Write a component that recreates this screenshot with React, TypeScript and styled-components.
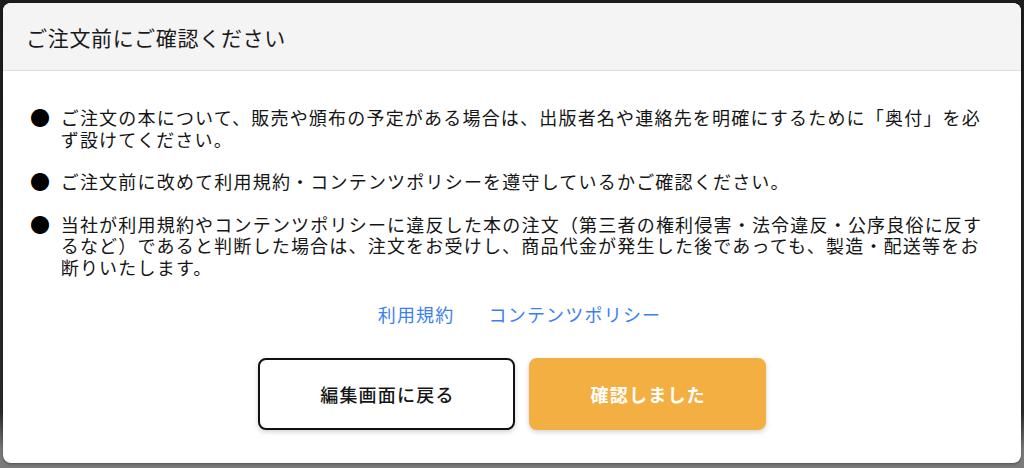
import React from "react";
import styled, { createGlobalStyle } from "styled-components";

const GlobalStyle = createGlobalStyle`
  html, body {
    margin: 0;
    padding: 0;
    width: 1024px;
    height: 468px;
    overflow: hidden;
  }
  body {
    background: linear-gradient(to bottom, #1c1c1c 0%, #2a2a2a 88%, #7b7b7b 96%, #7b7b7b 100%);
    font-family: "Noto Sans CJK JP", "Noto Sans", sans-serif;
    color: #111;
  }
`;

const Overlay = styled.div`
  box-sizing: border-box;
  width: 1024px;
  height: 468px;
  padding: 3px 3px 5px 3px;
  display: flex;
`;

const Dialog = styled.div`
  flex: 1;
  display: flex;
  flex-direction: column;
  background: #ffffff;
  border-radius: 8px;
  overflow: hidden;
  box-shadow: 0 1px 3px rgba(0, 0, 0, 0.35);
`;

const Header = styled.div`
  height: 67px;
  display: flex;
  align-items: center;
  padding-left: 23px;
  background: #f4f4f4;
  border-bottom: 1px solid #dcdcdc;
`;

const Title = styled.h2`
  margin: 0;
  font-size: 21px;
  font-weight: 400;
  letter-spacing: 0.7px;
  color: #1a1a1a;
  line-height: 24px;
`;

const Body = styled.div`
  flex: 1;
  display: flex;
  flex-direction: column;
  padding: 36px 28px 33px 28px;
`;

const List = styled.ul`
  list-style: none;
  margin: 0;
  padding: 0;
  display: flex;
  flex-direction: column;
  gap: 21px;
`;

const Item = styled.li`
  display: flex;
  align-items: flex-start;
  font-size: 18px;
  line-height: 21.5px;
  letter-spacing: 1.2px;
  color: #151515;
`;

const Bullet = styled.span`
  flex: 0 0 30.7px;
  font-size: 20px;
  line-height: 21.5px;
  letter-spacing: 0;
  margin-left: -1px;
  color: #000;
`;

const ItemText = styled.span`
  flex: 1;
`;

const Links = styled.div`
  margin-top: 25px;
  display: flex;
  justify-content: center;
  gap: 34px;
  padding-left: 15px;
`;

const Link = styled.a`
  font-size: 18px;
  line-height: 22px;
  letter-spacing: 1.2px;
  color: #3b7ff0;
  text-decoration: none;
  cursor: pointer;
`;

const Buttons = styled.div`
  margin-top: 33px;
  display: flex;
  justify-content: center;
  gap: 14px;
`;

const Button = styled.button<{ $primary?: boolean }>`
  box-sizing: border-box;
  height: 72px;
  padding: 0 58px 0 60px;
  border-radius: 8px;
  border: 2px solid ${(p) => (p.$primary ? "#f4af42" : "#111")};
  background: ${(p) => (p.$primary ? "#f4af42" : "#fff")};
  color: ${(p) => (p.$primary ? "#fff" : "#151515")};
  font-family: "Noto Sans CJK JP", "Noto Sans", sans-serif;
  font-size: 18px;
  font-weight: ${(p) => (p.$primary ? 700 : 500)};
  letter-spacing: 1.2px;
  box-shadow: 0 2px 5px rgba(0, 0, 0, 0.18);
  cursor: pointer;
`;

const items = [
  "ご注文の本について、販売や頒布の予定がある場合は、出版者名や連絡先を明確にするために「奥付」を必ず設けてください。",
  "ご注文前に改めて利用規約・コンテンツポリシーを遵守しているかご確認ください。",
  "当社が利用規約やコンテンツポリシーに違反した本の注文（第三者の権利侵害・法令違反・公序良俗に反するなど）であると判断した場合は、注文をお受けし、商品代金が発生した後であっても、製造・配送等をお断りいたします。",
];

export default function App() {
  return (
    <>
      <GlobalStyle />
      <Overlay>
        <Dialog>
          <Header>
            <Title>ご注文前にご確認ください</Title>
          </Header>
          <Body>
            <List>
              {items.map((t, i) => (
                <Item key={i}>
                  <Bullet>●</Bullet>
                  <ItemText>{t}</ItemText>
                </Item>
              ))}
            </List>
            <Links>
              <Link>利用規約</Link>
              <Link>コンテンツポリシー</Link>
            </Links>
            <Buttons>
              <Button>編集画面に戻る</Button>
              <Button $primary>確認しました</Button>
            </Buttons>
          </Body>
        </Dialog>
      </Overlay>
    </>
  );
}
